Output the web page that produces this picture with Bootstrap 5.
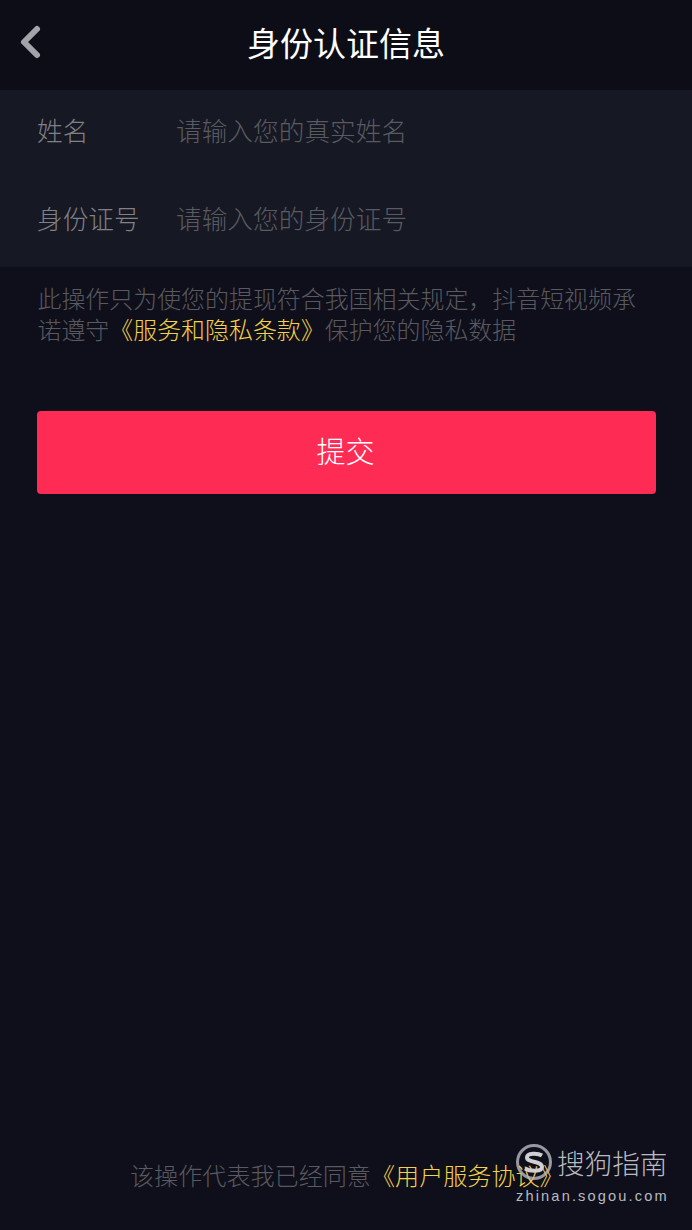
<!DOCTYPE html>
<html lang="zh-CN">
<head>
  <meta charset="UTF-8">
  <title>身份认证信息</title>
  <link href="https://cdn.jsdelivr.net/npm/bootstrap@5.3.3/dist/css/bootstrap.min.css" rel="stylesheet">
  <style>
    body {
      background: #0e0f1a;
      font-family: "Noto Sans CJK SC", "Noto Sans", sans-serif;
      font-weight: 300;
    }
    .screen { height: 1230px; width: 692px; position: relative; overflow: hidden; }
    .top-bar {
      height: 90px;
      background: #0c0d17;
      display: grid;
      grid-template-columns: 1fr auto 1fr;
      align-items: center;
      padding: 0 19px 6px 19px;
    }
    .page-title { font-size: 33px; line-height: 1; color: #fff; font-weight: 400; margin-top: 1px; }
    .form-block { background: #161823; height: 177px; padding-left: 37px; }
    .form-line { height: 88.5px; font-size: 25.7px; line-height: 1; padding-bottom: 9px; }
    .form-label-txt { width: 139px; color: #808086; }
    .form-hint { color: #5a5a61; }
    .note-txt {
      padding: 16px 50px 0 37.5px;
      font-size: 23.95px;
      line-height: 30.6px;
      color: #59595f;
      height: 144px;
    }
    .gold-link { color: #f6d148; text-decoration: none; }
    .submit-btn {
      background: #fe2c55;
      border: 0;
      border-radius: 4px;
      color: #fff;
      height: 83px;
      width: 619px;
      margin-left: 37px;
      font-size: 29px;
      font-weight: 300;
      padding: 0 2px 4px 0;
    }
    .submit-btn:hover { background: #fe2c55; color: #fff; }
    .agree-txt {
      margin-top: auto;
      height: 67px;
      font-size: 24.1px;
      line-height: 1;
      color: #59595f;
      padding-left: 130px;
    }
    .wm-mark {
      position: absolute;
      right: 24px;
      top: 1143px;
      width: 152px;
      color: #b9bac0;
    }
    .wm-name { font-size: 27.6px; line-height: 38px; margin-left: 41px; white-space: nowrap; }
    .wm-url { font-family: "Liberation Sans", sans-serif; font-size: 14.6px; line-height: 18px; letter-spacing: 2.15px; white-space: nowrap; font-weight: 400; margin-top: 6px; }
    .wm-logo { position: absolute; left: -1px; top: 0; }
  </style>
</head>
<body>

  <div class="screen d-flex flex-column">
    <div class="top-bar">
      <svg width="24" height="36" viewBox="0 0 24 36" aria-label="返回">
        <path d="M18 5 L5 18 L18 31" fill="none" stroke="#a3a4aa" stroke-width="6" stroke-linecap="round" stroke-linejoin="round"/>
      </svg>
      <div class="page-title">身份认证信息</div>
      <div></div>
    </div>

    <div class="form-block">
      <div class="form-line d-flex align-items-center">
        <div class="form-label-txt">姓名</div>
        <div class="form-hint">请输入您的真实姓名</div>
      </div>
      <div class="form-line d-flex align-items-center">
        <div class="form-label-txt">身份证号</div>
        <div class="form-hint">请输入您的身份证号</div>
      </div>
    </div>

    <div class="note-txt">此操作只为使您的提现符合我国相关规定，抖音短视频承诺遵守<a href="#" class="gold-link">《服务和隐私条款》</a>保护您的隐私数据</div>

    <div><button type="button" class="btn submit-btn">提交</button></div>

    <div class="agree-txt">该操作代表我已经同意<a href="#" class="gold-link">《用户服务协议》</a></div>

    <div class="wm-mark">
      <svg class="wm-logo" width="38" height="38" viewBox="0 0 38 38">
        <circle cx="19" cy="19" r="16.5" fill="none" stroke="#b9bac0" stroke-width="3" opacity=".8"/>
        <path d="M27 12.5 C23 10 12 9.5 12 14.5 C12 20 27 17.5 27 24 C27 29 15 28.5 10 25.5" fill="none" stroke="#d0d0d4" stroke-width="4"/>
      </svg>
      <div class="wm-name">搜狗指南</div>
      <div class="wm-url">zhinan.sogou.com</div>
    </div>
  </div>

  <script src="https://cdn.jsdelivr.net/npm/bootstrap@5.3.3/dist/js/bootstrap.bundle.min.js"></script>
</body>
</html>
